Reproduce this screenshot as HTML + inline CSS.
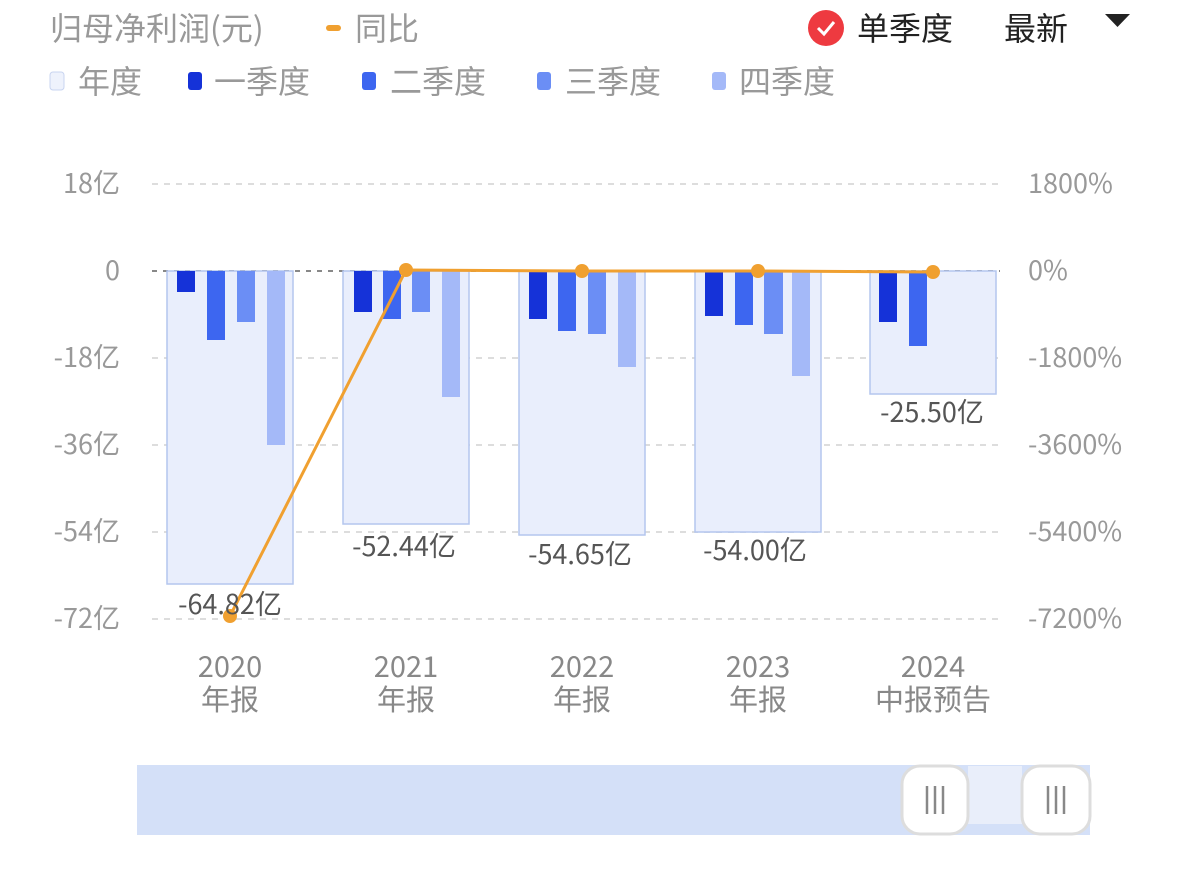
<!DOCTYPE html><html><head><meta charset="utf-8"><style>
body{margin:0;width:1179px;height:884px;background:#fff;overflow:hidden;font-family:"Noto Sans CJK SC","Liberation Sans",sans-serif}
</style></head><body>
<svg width="1179" height="884" xmlns="http://www.w3.org/2000/svg" font-family="Noto Sans CJK SC, Liberation Sans, sans-serif">
<text x="50" y="40" font-size="32" fill="#999">归母净利润(元)</text>
<rect x="326" y="25" width="15" height="6" rx="3" fill="#f0a030"/>
<text x="355" y="40" font-size="32" fill="#999">同比</text>
<circle cx="826" cy="28" r="18" fill="#ee3a40"/>
<path d="M818 28 l6 6 l10 -12" stroke="#fff" stroke-width="3" fill="none"/>
<text x="857" y="40" font-size="32" fill="#222">单季度</text>
<text x="1004" y="40" font-size="32" fill="#222">最新</text>
<path d="M1105 14 h25 l-12.5 13z" fill="#222"/>
<g font-size="32" fill="#999">
<rect x="50" y="72" width="14" height="18" rx="3" fill="#eef2fc" stroke="#c8d4f0"/><text x="78" y="93">年度</text>
<rect x="188" y="72" width="14" height="18" rx="3" fill="#1532d8"/><text x="214" y="93">一季度</text>
<rect x="362" y="72" width="14" height="18" rx="3" fill="#3d66f0"/><text x="390" y="93">二季度</text>
<rect x="537" y="72" width="14" height="18" rx="3" fill="#6b8ef5"/><text x="565" y="93">三季度</text>
<rect x="712" y="72" width="14" height="18" rx="3" fill="#a4b9f8"/><text x="739" y="93">四季度</text>
</g>
<g stroke="#ddd" stroke-width="2" stroke-dasharray="6,6">
<line x1="152" y1="184" x2="1000" y2="184"/><line x1="152" y1="358" x2="1000" y2="358"/><line x1="152" y1="445" x2="1000" y2="445"/><line x1="152" y1="532" x2="1000" y2="532"/><line x1="152" y1="619" x2="1000" y2="619"/>
</g>
<line x1="152" y1="271" x2="1000" y2="271" stroke="#888" stroke-width="2" stroke-dasharray="5,6"/>
<g font-size="27" fill="#999" text-anchor="end">
<text x="120" y="193">18亿</text><text x="120" y="280">0</text><text x="120" y="367">-18亿</text><text x="120" y="454">-36亿</text><text x="120" y="541">-54亿</text><text x="120" y="628">-72亿</text>
</g>
<g font-size="27" fill="#999">
<text x="1028" y="193">1800%</text><text x="1028" y="280">0%</text><text x="1028" y="367">-1800%</text><text x="1028" y="454">-3600%</text><text x="1028" y="541">-5400%</text><text x="1028" y="628">-7200%</text>
</g>
<g fill="#e9eefc" stroke="#b4c6ee" stroke-width="1.5">
<rect x="167" y="271" width="126" height="313"/><rect x="343" y="271" width="126" height="253"/><rect x="519" y="271" width="126" height="264"/><rect x="695" y="271" width="126" height="261"/><rect x="870" y="271" width="126" height="123"/>
</g>
<g>
<rect x="177" y="271" width="18" height="21" fill="#1532d8"/><rect x="207" y="271" width="18" height="69" fill="#3d66f0"/><rect x="237" y="271" width="18" height="51" fill="#6b8ef5"/><rect x="267" y="271" width="18" height="174" fill="#a4b9f8"/>
<rect x="354" y="271" width="18" height="41" fill="#1532d8"/><rect x="383" y="271" width="18" height="48" fill="#3d66f0"/><rect x="412" y="271" width="18" height="41" fill="#6b8ef5"/><rect x="442" y="271" width="18" height="126" fill="#a4b9f8"/>
<rect x="529" y="271" width="18" height="48" fill="#1532d8"/><rect x="558" y="271" width="18" height="60" fill="#3d66f0"/><rect x="588" y="271" width="18" height="63" fill="#6b8ef5"/><rect x="618" y="271" width="18" height="96" fill="#a4b9f8"/>
<rect x="705" y="271" width="18" height="45" fill="#1532d8"/><rect x="735" y="271" width="18" height="54" fill="#3d66f0"/><rect x="764" y="271" width="19" height="63" fill="#6b8ef5"/><rect x="792" y="271" width="18" height="105" fill="#a4b9f8"/>
<rect x="879" y="271" width="18" height="51" fill="#1532d8"/><rect x="909" y="271" width="18" height="75" fill="#3d66f0"/>
</g>
<polyline points="230,616 406,270 582,271 758,271 933,272" fill="none" stroke="#f0a030" stroke-width="3"/>
<g fill="#f0a030"><circle cx="230" cy="616" r="7"/><circle cx="406" cy="270" r="7"/><circle cx="582" cy="271" r="7"/><circle cx="758" cy="271" r="7"/><circle cx="933" cy="272" r="7"/></g>
<g font-size="27" fill="#555" text-anchor="middle">
<text x="230" y="614">-64.82亿</text><text x="404" y="556">-52.44亿</text><text x="580" y="564">-54.65亿</text><text x="755" y="560">-54.00亿</text><text x="932" y="422">-25.50亿</text>
</g>
<g font-size="29" fill="#888" text-anchor="middle">
<text x="230" y="677">2020</text><text x="230" y="710">年报</text>
<text x="406" y="677">2021</text><text x="406" y="710">年报</text>
<text x="582" y="677">2022</text><text x="582" y="710">年报</text>
<text x="758" y="677">2023</text><text x="758" y="710">年报</text>
<text x="933" y="677">2024</text><text x="933" y="710">中报预告</text>
</g>
<rect x="137" y="765" width="953" height="70" fill="#d4e0f8"/>
<rect x="968" y="766" width="54" height="58" fill="#e9eefa"/>
<rect x="902" y="766" width="66" height="68" rx="18" fill="#fff" stroke="#ddd" stroke-width="3"/>
<rect x="1022" y="766" width="68" height="68" rx="18" fill="#fff" stroke="#ddd" stroke-width="3"/>
<g stroke="#888" stroke-width="2.5">
<line x1="927" y1="786" x2="927" y2="814"/><line x1="935" y1="786" x2="935" y2="814"/><line x1="943" y1="786" x2="943" y2="814"/>
<line x1="1048" y1="786" x2="1048" y2="814"/><line x1="1056" y1="786" x2="1056" y2="814"/><line x1="1064" y1="786" x2="1064" y2="814"/>
</g>
</svg>
</body></html>
